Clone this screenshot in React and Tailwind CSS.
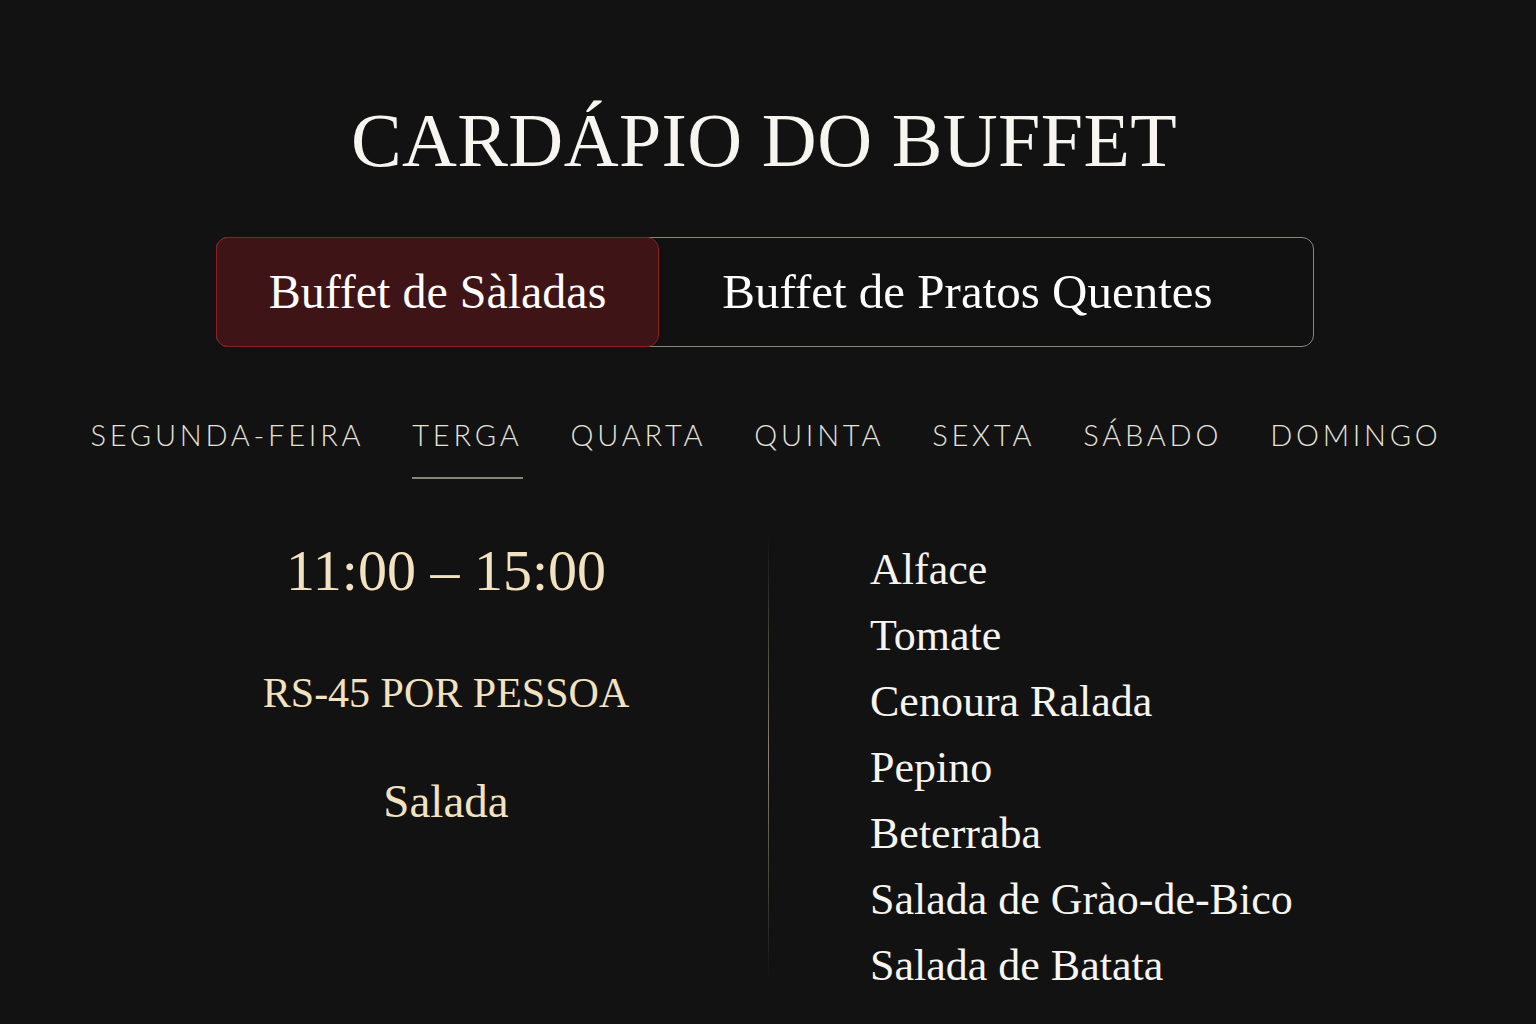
import React, { useState } from 'react';

const days = ['SEGUNDA-FEIRA', 'TERGA', 'QUARTA', 'QUINTA', 'SEXTA', 'SÁBADO', 'DOMINGO'];

const saladas = [
  'Alface',
  'Tomate',
  'Cenoura Ralada',
  'Pepino',
  'Beterraba',
  'Salada de Grào-de-Bico',
  'Salada de Batata',
];

const serif = { fontFamily: '"Liberation Serif", "Times New Roman", serif' };

const App = () => {
  const [tab, setTab] = useState(0);
  const [day, setDay] = useState(1);

  return (
    <div className="min-h-screen w-full bg-[#121212] text-white" style={serif}>
      {/* Titulo */}
      <h1 className="pt-[92px] pr-[8px] text-center text-[76px] leading-[96px] tracking-[0.005em] text-[#f7f5f0] font-['Liberation_Serif',serif]">
        CARDÁPIO DO BUFFET
      </h1>

      {/* Abas */}
      <div className="mt-[49px] flex justify-center pr-[6px]">
        <div className="flex h-[110px] w-[1098px] rounded-[12px] border border-[#8c8676] bg-[#111111]">
          <button
            onClick={() => setTab(0)}
            className={`-m-px flex w-[443px] items-center justify-center rounded-[12px] border text-[48px] font-['Liberation_Serif',serif] ${
              tab === 0 ? 'border-[#8e1f22] bg-[#3e1416] text-white' : 'border-transparent text-white'
            }`}
          >
            Buffet de Sàladas
          </button>
          <button
            onClick={() => setTab(1)}
            className={`flex flex-1 items-center justify-center pr-[36px] rounded-[12px] text-[49px] font-['Liberation_Serif',serif] ${
              tab === 1 ? 'bg-[#3e1416] text-white' : 'text-white'
            }`}
          >
            Buffet de Pratos Quentes
          </button>
        </div>
      </div>

      {/* Dias */}
      <nav className="mt-[70px] flex justify-center gap-[48px] pr-[4px] font-['Lato',sans-serif]">
        {days.map((d, i) => (
          <button
            key={d}
            onClick={() => setDay(i)}
            className="flex flex-col items-center text-[29px] font-light tracking-[0.13em] text-[#e6e2d8]"
          >
            <span className="leading-[36px]">{d}</span>
            <span className={`mt-[24px] h-[2px] w-full ${day === i ? 'bg-[#8a8577]' : 'bg-transparent'}`} />
          </button>
        ))}
      </nav>

      {/* Conteudo */}
      <div className="mt-[58px] flex">
        <div className="flex w-[768px] flex-col items-center pl-[124px] pt-[2px]">
          <div className="text-[58px] leading-[64px] text-[#f3e2c0] font-['Liberation_Serif',serif]">11:00 – 15:00</div>
          <div className="mt-[66px] text-[42px] leading-[48px] text-[#f3e2c0] font-['Liberation_Serif',serif]">RS-45 POR PESSOA</div>
          <div className="mt-[58px] text-[47px] leading-[52px] text-[#f3e2c0] font-['Liberation_Serif',serif]">Salada</div>
        </div>
        <div className="h-[440px] w-px bg-gradient-to-b from-transparent via-[#8a8577] to-transparent" />
        <ul className="pl-[101px] font-['Liberation_Serif',serif]">
          {saladas.map((s) => (
            <li key={s} className="text-[44px] leading-[66px] text-[#f7f5f0]">
              {s}
            </li>
          ))}
        </ul>
      </div>
    </div>
  );
};

export default App;
